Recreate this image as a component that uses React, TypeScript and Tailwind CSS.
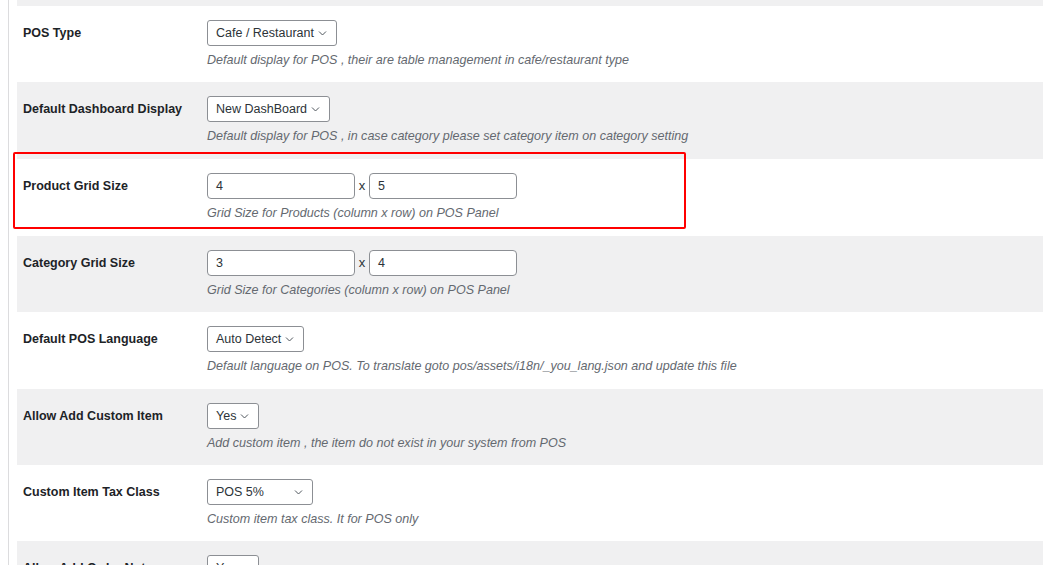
import React from 'react';

type Row = {
  label: string;
  h: string;
  gray: boolean;
  kind: 'select' | 'grid';
  value?: string;
  width?: string;
  cols?: string;
  rows?: string;
  desc: string;
};

const ROWS: Row[] = [
  { label: 'POS Type', h: 'h-[76px]', gray: false, kind: 'select', value: 'Cafe / Restaurant', desc: 'Default display for POS , their are table management in cafe/restaurant type' },
  { label: 'Default Dashboard Display', h: 'h-[77px]', gray: true, kind: 'select', value: 'New DashBoard', desc: 'Default display for POS , in case category please set category item on category setting' },
  { label: 'Product Grid Size', h: 'h-[77px]', gray: false, kind: 'grid', cols: '4', rows: '5', desc: 'Grid Size for Products (column x row) on POS Panel' },
  { label: 'Category Grid Size', h: 'h-[76px]', gray: true, kind: 'grid', cols: '3', rows: '4', desc: 'Grid Size for Categories (column x row) on POS Panel' },
  { label: 'Default POS Language', h: 'h-[77px]', gray: false, kind: 'select', value: 'Auto Detect', desc: 'Default language on POS. To translate goto pos/assets/i18n/_you_lang.json and update this file' },
  { label: 'Allow Add Custom Item', h: 'h-[76px]', gray: true, kind: 'select', value: 'Yes', desc: 'Add custom item , the item do not exist in your system from POS' },
  { label: 'Custom Item Tax Class', h: 'h-[76px]', gray: false, kind: 'select', value: 'POS 5%', width: 'w-[106px] justify-between', desc: 'Custom item tax class. It for POS only' },
  { label: 'Allow Add Order Note', h: 'h-[77px]', gray: true, kind: 'select', value: 'Yes', desc: '' },
];

const Chevron = () => (
  <svg width="9" height="6" viewBox="0 0 9 6" fill="none" className="shrink-0">
    <path d="M1 1.5l3.5 3.5 3.5-3.5" stroke="#50575e" strokeWidth="1" />
  </svg>
);

const Select: React.FC<{ value: string; width?: string }> = ({ value, width }) => (
  <div className={`${width ?? 'w-fit'} h-[26px] flex items-center gap-[4px] pl-[8px] pr-[9px] bg-white border border-[#8c8f94] rounded-[3px] text-[12.5px] text-[#2c3338]`}>
    <span className="whitespace-nowrap">{value}</span>
    <Chevron />
  </div>
);

const NumInput: React.FC<{ value: string }> = ({ value }) => (
  <div className="w-[148px] h-[26px] flex items-center pl-[8px] bg-white border border-[#8c8f94] rounded-[4px] text-[12.5px] text-[#2c3338]">
    {value}
  </div>
);

export default function App() {
  return (
    <div className="h-[565px] w-[1043px] overflow-hidden bg-white flex font-['Liberation_Sans',Arial,sans-serif]">
      <div className="w-[8px] shrink-0" />
      <div className="w-px shrink-0 bg-[#dcdcde]" />
      <div className="w-[8px] shrink-0" />
      <div className="flex-1 relative">
        <div className="h-[6px] bg-[#f0f0f1]" />
        {ROWS.map((r) => (
          <div key={r.label} className={`${r.h} ${r.gray ? 'bg-[#f0f0f1]' : 'bg-white'} flex pt-[14px]`}>
            <div className="w-[190px] shrink-0 pl-[6px] pt-[6px] text-[12.5px] font-bold text-[#1d2327] leading-[15px]">
              {r.label}
            </div>
            <div className="flex flex-col">
              {r.kind === 'select' ? (
                <Select value={r.value!} width={r.width} />
              ) : (
                <div className="flex items-center">
                  <NumInput value={r.cols!} />
                  <span className="w-[14px] text-center text-[13px] text-[#2c3338]">x</span>
                  <NumInput value={r.rows!} />
                </div>
              )}
              {r.desc && (
                <p className="mt-[6px] text-[12.55px] italic text-[#646970] leading-[16px] whitespace-nowrap">{r.desc}</p>
              )}
            </div>
          </div>
        ))}
        <div className="absolute left-[-4px] top-[152px] w-[673px] h-[77px] border-[2.5px] border-[#ff0000] rounded-[2px] pointer-events-none" />
      </div>
    </div>
  );
}
